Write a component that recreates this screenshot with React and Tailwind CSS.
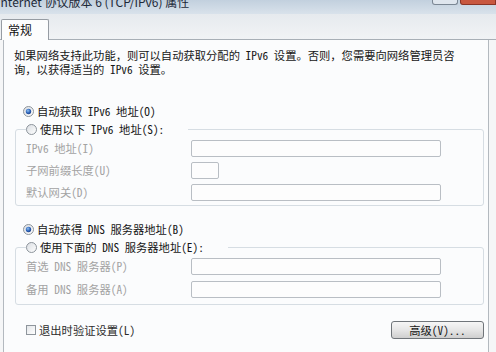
import React from 'react';

// Win7-style radio button
const Radio = ({ checked }) => (
  <svg width="11" height="11" viewBox="0 0 11 11" className="shrink-0">
    <defs>
      <linearGradient id="rbFill" x1="0" y1="0" x2="1" y2="1">
        <stop offset="0" stopColor="#d9dde2" />
        <stop offset="1" stopColor="#ffffff" />
      </linearGradient>
      <radialGradient id="rbDot" cx="0.4" cy="0.35" r="0.7">
        <stop offset="0" stopColor="#8fc1f2" />
        <stop offset="0.6" stopColor="#2c62b8" />
        <stop offset="1" stopColor="#1d3f86" />
      </radialGradient>
    </defs>
    <circle cx="5.5" cy="5.5" r="5" fill="url(#rbFill)" stroke="#8d949b" />
    {checked && <circle cx="5.5" cy="5.5" r="2.7" fill="url(#rbDot)" />}
  </svg>
);

const Field = ({ label, short }) => (
  <div className="flex items-center h-[17px]">
    <span className="w-[165px] shrink-0 text-[#a3a3a3] whitespace-nowrap">{label}</span>
    <div
      className={`${short ? 'w-[28px]' : 'w-[250px]'} h-[17px] border border-[#b9bec4] rounded-[2px] bg-[#fdfdfd]`}
    />
  </div>
);

const Group = ({ legend, pad, children }) => (
  <fieldset className={`border border-[#d6dde3] rounded-[3px] ${pad}`}>
    <legend className="ml-[10px] pr-[24px]">
      <span className="flex items-center h-[18px] gap-[3px] whitespace-nowrap">
        <Radio />
        <span>{legend}</span>
      </span>
    </legend>
    {children}
  </fieldset>
);

export default function App() {
  return (
    <div className="w-[496px] h-[352px] overflow-hidden bg-[#f5f6f7] flex flex-col text-[11.3px] text-[#161616] font-['Noto_Sans_Mono_CJK_SC','Noto_Sans_CJK_SC',sans-serif]">
      {/* title bar, cut off at the top */}
      <div className="h-[14px] shrink-0 flex items-start overflow-hidden bg-gradient-to-b from-[#c2d0de] to-[#d9e2eb]">
        <span className="-ml-[3px] -mt-[7px] text-[12px] leading-[17px] text-[#1d2938] whitespace-nowrap font-['Noto_Sans_CJK_SC',sans-serif]">
          Internet 协议版本 6 (TCP/IPv6) 属性
        </span>
        <div className="ml-auto flex">
          <div className="w-[26px] h-[5px] mr-[2px] border border-t-0 border-[#7b8794] rounded-b-[3px] bg-[#dfe6ee]" />
          <div className="w-[36px] h-[5px] border border-t-0 border-[#8a3426] rounded-bl-[3px] bg-[#c8573f]" />
        </div>
      </div>

      {/* tab strip */}
      <div className="h-[26px] shrink-0 flex items-end bg-gradient-to-b from-[#e6eaee] to-[#f1f3f5] border-b border-[#a8afb6]">
        <div className="ml-px w-[48px] h-[21px] -mb-px flex items-center pl-[6px] bg-[#fcfdfd] border border-b-0 border-[#969ca3] rounded-t-[2px] text-[12px] text-[#111]">
          常规
        </div>
      </div>

      {/* panel */}
      <div className="flex-1 flex pl-[3px]">
        <div className="w-[486px] bg-[#fbfcfd] border-l border-r border-[#b3b9bf] pl-[11px] pr-[4px] pt-[8px]">
          <p className="-ml-px leading-[14px] whitespace-nowrap">
            如果网络支持此功能，则可以自动获取分配的 IPv6 设置。否则，您需要向网络管理员咨
            <br />
            询，以获得适当的 IPv6 设置。
          </p>

          <div className="mt-[26px] ml-[8px] h-[18px] flex items-center gap-[3px] whitespace-nowrap">
            <Radio checked />
            <span>自动获取 IPv6 地址(O)</span>
          </div>

          <Group legend="使用以下 IPv6 地址(S):" pad="pb-[4px]">
            <div className="mt-[2px] pl-[10px] flex flex-col gap-[5px]">
              <Field label="IPv6 地址(I)" />
              <Field label="子网前缀长度(U)" short />
              <Field label="默认网关(D)" />
            </div>
          </Group>

          <div className="mt-[14px] ml-[8px] h-[18px] flex items-center gap-[3px] whitespace-nowrap">
            <Radio checked />
            <span>自动获得 DNS 服务器地址(B)</span>
          </div>

          <Group legend="使用下面的 DNS 服务器地址(E):" pad="pb-[6px]">
            <div className="mt-[2px] pl-[10px] flex flex-col gap-[6px]">
              <Field label="首选 DNS 服务器(P)" />
              <Field label="备用 DNS 服务器(A)" />
            </div>
          </Group>

          <div className="mt-[16px] h-[18px] flex items-center justify-between">
            <div className="ml-[11px] flex items-center gap-[3px] whitespace-nowrap text-[#2b2b2b]">
              <div className="w-[10px] h-[10px] border border-[#8e959c] bg-gradient-to-br from-[#e3e6e9] to-white" />
              <span>退出时验证设置(L)</span>
            </div>
            <button className="w-[93px] h-[18px] flex items-center justify-center border border-[#70757a] rounded-[3px] bg-gradient-to-b from-[#f6f6f6] via-[#e6e6e6] to-[#cfcfcf] text-[#161616] whitespace-nowrap">
              高级(V)...
            </button>
          </div>
        </div>
      </div>
    </div>
  );
}
